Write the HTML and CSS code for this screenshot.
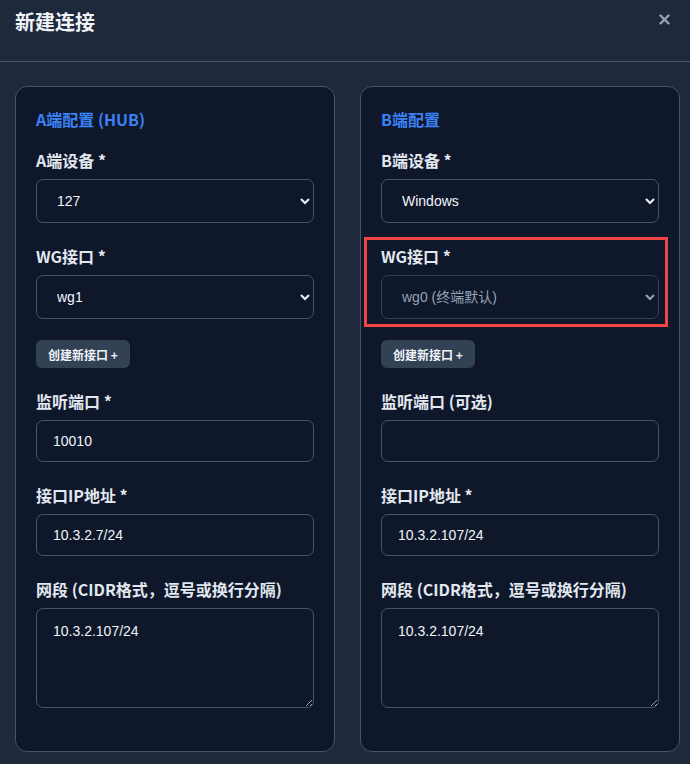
FILE: index.html
```html
<!DOCTYPE html>
<html lang="zh-CN">
<head>
<meta charset="utf-8">
<title>新建连接</title>
<link rel="stylesheet" href="styles.css">
</head>
<body>
<div class="modal">
  <header class="modal-header">
    <h2 class="modal-title">新建连接</h2>
    <button class="close-btn" type="button" aria-label="关闭">
      <svg width="11" height="11" viewBox="0 0 11 11"><path d="M1.5 1.5 L9.5 9.5 M9.5 1.5 L1.5 9.5" stroke="currentColor" stroke-width="2.4" stroke-linecap="round"/></svg>
    </button>
  </header>
  <div class="modal-body">
    <section class="panel">
      <h3 class="panel-title">A端配置 (HUB)</h3>
      <div class="field">
        <label class="field-label">A端设备 *</label>
        <select class="control select"><option>127</option></select>
      </div>
      <div class="field">
        <label class="field-label">WG接口 *</label>
        <select class="control select"><option>wg1</option></select>
        <button class="btn-small" type="button">创建新接口 +</button>
      </div>
      <div class="field">
        <label class="field-label">监听端口 *</label>
        <input class="control input" type="text" value="10010">
      </div>
      <div class="field">
        <label class="field-label">接口IP地址 *</label>
        <input class="control input" type="text" value="10.3.2.7/24">
      </div>
      <div class="field">
        <label class="field-label">网段 (CIDR格式，逗号或换行分隔)</label>
        <textarea class="control textarea">10.3.2.107/24</textarea>
      </div>
    </section>
    <section class="panel">
      <h3 class="panel-title">B端配置</h3>
      <div class="field">
        <label class="field-label">B端设备 *</label>
        <select class="control select"><option>Windows</option></select>
      </div>
      <div class="field">
        <div class="highlight-group">
          <label class="field-label">WG接口 *</label>
          <select class="control select select-disabled"><option>wg0 (终端默认)</option></select>
          <div class="highlight-box"></div>
        </div>
        <button class="btn-small" type="button">创建新接口 +</button>
      </div>
      <div class="field">
        <label class="field-label">监听端口 (可选)</label>
        <input class="control input" type="text" value="">
      </div>
      <div class="field">
        <label class="field-label">接口IP地址 *</label>
        <input class="control input" type="text" value="10.3.2.107/24">
      </div>
      <div class="field">
        <label class="field-label">网段 (CIDR格式，逗号或换行分隔)</label>
        <textarea class="control textarea">10.3.2.107/24</textarea>
      </div>
    </section>
  </div>
</div>
</body>
</html>
```
FILE: styles.css
```css
* { box-sizing: border-box; }
html, body {
  margin: 0;
  padding: 0;
  background: #1e293b;
}
body {
  font-family: "Noto Sans", "Noto Sans CJK SC", sans-serif;
  color: #e2e8f0;
  color-scheme: dark;
}
.modal {
  width: 690px;
  min-height: 764px;
  background: #1e293b;
}
.modal-header {
  height: 62px;
  border-bottom: 1px solid #475569;
  display: flex;
  justify-content: space-between;
  align-items: flex-start;
  padding: 8px 20px 0 15px;
}
.modal-title {
  margin: 0;
  font-size: 20px;
  line-height: 28px;
  font-weight: 700;
  color: #f1f5f9;
  font-family: "Noto Sans CJK SC", sans-serif;
}
.close-btn {
  background: none;
  border: 0;
  padding: 0;
  margin-top: 6px;
  color: #94a3b8;
  width: 11px;
  height: 11px;
  display: flex;
}
.modal-body {
  display: grid;
  grid-template-columns: 320px 320px;
  column-gap: 25px;
  padding: 24px 0 0 15px;
}
.panel {
  background: #0f172a;
  border: 1px solid #475569;
  border-radius: 12px;
  padding: 20px 20px 43px;
  display: flex;
  flex-direction: column;
  gap: 22px;
}
.panel-title {
  margin: 0 0 -4px;
  font-size: 16px;
  line-height: 24px;
  font-weight: 700;
  color: #3b82f6;
  font-family: "Noto Sans CJK SC", sans-serif;
}
.field {
  display: flex;
  flex-direction: column;
  align-items: flex-start;
}
.highlight-group {
  position: relative;
  display: flex;
  flex-direction: column;
  width: 100%;
}
.field-label {
  display: block;
  font-size: 16px;
  line-height: 22px;
  font-weight: 700;
  color: #e2e8f0;
  margin-bottom: 8px;
  font-family: "Noto Sans CJK SC", sans-serif;
}
.control {
  width: 100%;
  background: #0f172a;
  border: 1px solid #475569;
  border-radius: 7px;
  color: #f1f5f9;
  font-family: "Liberation Sans", "Noto Sans CJK SC", sans-serif;
  font-size: 14px;
  outline: none;
  margin: 0;
}
.select {
  height: 44px;
  padding: 0 12px 0 16px;
}
.select-disabled {
  color: #94a3b8;
  border-color: #334155;
}
.input {
  height: 42px;
  padding: 0 16px;
}
.textarea {
  height: 100px;
  padding: 12px 16px;
  line-height: 20px;
  resize: vertical;
  display: block;
}
.btn-small {
  margin-top: 21px;
  height: 28px;
  padding: 0 12px;
  border: 0;
  border-radius: 6px;
  background: #334155;
  color: #f1f5f9;
  font-size: 12px;
  font-weight: 700;
  font-family: "Noto Sans CJK SC", sans-serif;
}
.highlight-box {
  position: absolute;
  left: -17px;
  top: -8px;
  right: -9px;
  bottom: -8px;
  border: 3px solid #ef4444;
  pointer-events: none;
}
```
